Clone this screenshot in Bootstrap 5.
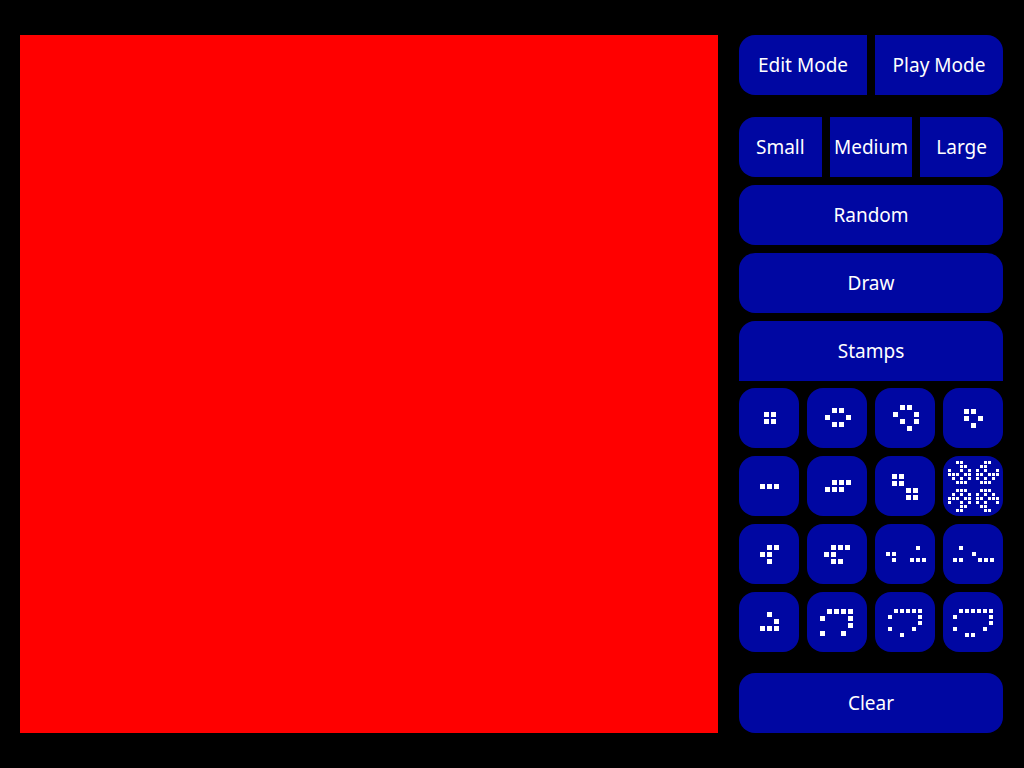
<!DOCTYPE html>
<html lang="en">
<head>
<meta charset="utf-8">
<meta name="viewport" content="width=device-width, initial-scale=1">
<title>Game of Life</title>
<link href="https://cdn.jsdelivr.net/npm/bootstrap@5.3.0/dist/css/bootstrap.min.css" rel="stylesheet">
<style>
  body { background: #000; font-family: "Noto Sans", "Open Sans", sans-serif; }
  .game { gap: 21px; padding: 20px; padding-right: 21px; }
  .board { background: #f00; aspect-ratio: 1; min-width: 0; }
  .controls { width: 264px; }
  .modes { margin-bottom: 22px; }
  .btn-life {
    --bs-btn-color: #fff;
    --bs-btn-bg: #0007a2;
    --bs-btn-hover-color: #fff;
    --bs-btn-hover-bg: #1a22c4;
    --bs-btn-active-color: #fff;
    --bs-btn-active-bg: #1a22c4;
    --bs-btn-border-width: 0;
    --bs-btn-border-radius: 16px;
    --bs-btn-padding-x: 0;
    --bs-btn-padding-y: 0;
    --bs-btn-font-size: 19px;
    height: 60px;
  }
  .split { flex: 1 1 0; min-width: 0; }
  .stamp-grid { display: grid; grid-template-columns: repeat(4, 1fr); gap: 8px; margin-top: -1px; }
  .stamp-grid svg { display: block; margin: auto; fill: #fff; shape-rendering: crispEdges; }
</style>
</head>
<body>
<main class="game d-flex align-items-center min-vh-100">
  <div class="board flex-grow-1" role="img" aria-label="Board"></div>
  <div class="controls d-flex flex-column flex-shrink-0 align-self-center">
    <div class="modes d-flex gap-2">
      <button type="button" class="btn btn-life split rounded-end-0">Edit Mode</button>
      <button type="button" class="btn btn-life split rounded-start-0">Play Mode</button>
    </div>
    <div class="d-flex flex-column gap-2">
      <div class="d-flex gap-2">
        <button type="button" class="btn btn-life split rounded-end-0">Small</button>
        <button type="button" class="btn btn-life split rounded-0">Medium</button>
        <button type="button" class="btn btn-life split rounded-start-0">Large</button>
      </div>
      <button type="button" class="btn btn-life">Random</button>
      <button type="button" class="btn btn-life">Draw</button>
      <button type="button" class="btn btn-life rounded-bottom-0">Stamps</button>
      <div class="stamp-grid" id="stamps"></div>
    </div>
    <button type="button" class="btn btn-life clear-button">Clear</button>
  </div>
</main>
<style>
  .clear-button { margin-top: 21px; }
</style>
<script src="https://cdn.jsdelivr.net/npm/bootstrap@5.3.0/dist/js/bootstrap.bundle.min.js"></script>
<script>
  // Each stamp: name, cell size, then rows of [y, x, x, ...] in a 60-unit tile.
  const quadrant = [[2, 3], [3, 4], [0, 3, 5], [0, 1, 2, 4, 5], [1, 3, 5], [2, 3, 4]];
  const pulsarRow = (cols, y) => [y, ...cols.map(c => 5 + 4 * c), ...cols.map(c => 53 - 4 * c)];
  const pulsar = [
    ...quadrant.map((cols, r) => pulsarRow(cols, 5 + 4 * r)),
    ...quadrant.map((cols, r) => pulsarRow(cols, 53 - 4 * r))
  ];
  const stamps = [
    ['Block', 5, [[24, 25, 32], [31, 25, 32]]],
    ['Beehive', 5, [[20, 25, 32], [27, 18, 39], [34, 25, 32]]],
    ['Loaf', 5, [[17, 25, 32], [24, 18, 39], [31, 25, 39], [38, 32]]],
    ['Boat', 5, [[21, 21, 28], [28, 21, 35], [35, 28]]],
    ['Blinker', 5, [[28, 21, 28, 35]]],
    ['Toad', 5, [[24, 25, 32, 39], [31, 18, 25, 32]]],
    ['Beacon', 5, [[18, 17, 24], [25, 17, 24], [32, 31, 38], [39, 31, 38]]],
    ['Pulsar', 3, pulsar],
    ['R-pentomino', 5, [[21, 28, 35], [28, 21, 28], [35, 28]]],
    ['Heptomino', 5, [[21, 24, 31, 38], [28, 17, 24], [35, 24, 31]]],
    ['Diehard', 4, [[22, 41], [28, 11, 17], [34, 17, 35, 41, 47]]],
    ['Acorn', 4, [[22, 16], [28, 29], [34, 10, 16, 35, 41, 47]]],
    ['Glider', 5, [[20, 28], [27, 35], [34, 21, 28, 35]]],
    ['Lightweight spaceship', 5, [[17, 20, 27, 34, 41], [24, 13, 41], [31, 41], [39, 13, 34]]],
    ['Middleweight spaceship', 4, [[17, 19, 25, 31, 37, 43], [23, 13, 43], [29, 43], [35, 13, 37], [41, 25]]],
    ['Heavyweight spaceship', 4, [[17, 16, 22, 28, 34, 40, 46], [23, 10, 46], [29, 46], [35, 10, 40], [41, 22, 28]]]
  ];
  document.getElementById('stamps').innerHTML = stamps.map(([name, size, rows]) => {
    const d = rows.map(([y, ...xs]) => xs.map(x => `M${x} ${y}h${size}v${size}h-${size}z`).join('')).join('');
    return `<button type="button" class="btn btn-life" aria-label="${name}"><svg width="60" height="60" viewBox="0 0 60 60" aria-hidden="true"><path d="${d}"/></svg></button>`;
  }).join('');
</script>
</body>
</html>
